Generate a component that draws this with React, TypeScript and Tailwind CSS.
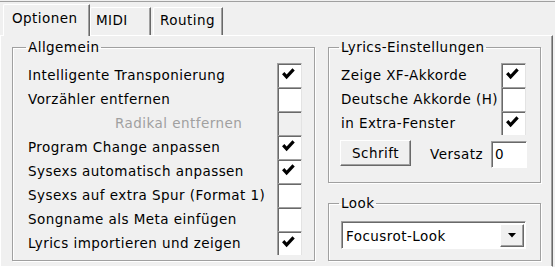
import clsx from "clsx";

const rows = [
  { label: "Intelligente Transponierung", checked: true },
  { label: "Vorzähler entfernen", checked: false },
  { label: "Radikal entfernen", checked: false, disabled: true },
  { label: "Program Change anpassen", checked: true },
  { label: "Sysexs automatisch anpassen", checked: true },
  { label: "Sysexs auf extra Spur (Format 1)", checked: false },
  { label: "Songname als Meta einfügen", checked: false },
  { label: "Lyrics importieren und zeigen", checked: true },
];

const lyrics = [
  { label: "Zeige XF-Akkorde", checked: true },
  { label: "Deutsche Akkorde (H)", checked: false },
  { label: "in Extra-Fenster", checked: true },
];

function Check() {
  return (
    <svg width="13" height="12" viewBox="0 0 13 12">
      <polyline
        points="1.2,5.2 4.6,8.8 11.6,1.4"
        fill="none"
        stroke="#000"
        strokeWidth="3.2"
      />
    </svg>
  );
}

function Box({ checked, disabled }: { checked?: boolean; disabled?: boolean }) {
  return (
    <div
      className={clsx(
        "w-[25px] h-[24px] shrink-0 border-t border-l border-r border-[#a0a0a0] border-r-[#e3e3e3] shadow-[inset_1px_1px_0_#696969] pl-[4px] pt-[4px]",
        disabled ? "bg-[#f0f0f0]" : "bg-white",
      )}
    >
      {checked && <Check />}
    </div>
  );
}

function Group({
  title,
  className,
  children,
}: {
  title: string;
  className?: string;
  children: React.ReactNode;
}) {
  return (
    <fieldset
      className={clsx(
        "border border-[#a0a0a0] shadow-[inset_1px_1px_0_#fff,1px_1px_0_#fff]",
        className,
      )}
    >
      <legend className="px-[2px] leading-[16px]">{title}</legend>
      {children}
    </fieldset>
  );
}

export default function App() {
  return (
    <div className="w-[555px] h-[267px] overflow-hidden bg-[#f0f0f0] pt-px text-[13.5px] tracking-[0.45px] text-black font-['Tahoma','DejaVu_Sans',sans-serif]">
      <div className="h-[266px] flex flex-col border-t border-[#a0a0a0]">
        {/* tab strip */}
        <div className="h-[33px] flex items-end pl-[3px] shrink-0">
          <div className="relative z-10 w-[87px] h-[32px] -mb-px bg-[#f0f0f0] border-t border-l border-white border-r border-r-[#696969] shadow-[inset_-1px_0_0_#a0a0a0] rounded-tl-[2px] pl-[8px] pt-[5px] leading-[16px]">
            Optionen
          </div>
          <div className="w-[61px] h-[28px] border-t border-l border-white border-r border-r-[#696969] shadow-[inset_-1px_0_0_#a0a0a0] rounded-tl-[2px] pl-[5px] pt-[4px] leading-[16px]">
            MIDI
          </div>
          <div className="ml-[2px] w-[70px] h-[28px] border-t border-l border-white border-r border-r-[#696969] shadow-[inset_-1px_0_0_#a0a0a0] rounded-tl-[2px] pl-[6px] pt-[4px] leading-[16px]">
            Routing
          </div>
        </div>

        {/* tab panel */}
        <div className="w-[553px] flex-1 border-t border-l border-b border-white border-r border-r-[#696969] shadow-[inset_-1px_0_0_#a0a0a0] pl-[11px] pt-[3px] flex gap-[13px]">
          <Group title="Allgemein" className="w-[303px] h-[222px] [&>legend]:ml-[13px]">
            <div className="pt-[8px] pl-[15px] pr-[12px] flex flex-col">
              {rows.map((r) => (
                <div key={r.label} className="h-[24px] flex items-center justify-between">
                  <span
                    className={clsx(
                      "whitespace-nowrap leading-[16px]",
                      r.disabled && "pl-[87px] text-[#a0a0a0]",
                    )}
                  >
                    {r.label}
                  </span>
                  <Box checked={r.checked} disabled={r.disabled} />
                </div>
              ))}
            </div>
          </Group>

          <div className="flex flex-col">
            <Group title="Lyrics-Einstellungen" className="w-[213px] [&>legend]:ml-[10px]">
              <div className="pt-[8px] pb-[14px] pl-[12px] pr-[14px]">
                {lyrics.map((r) => (
                  <div key={r.label} className="h-[24px] flex items-center justify-between">
                    <span className="whitespace-nowrap leading-[16px]">{r.label}</span>
                    <Box checked={r.checked} />
                  </div>
                ))}
                <div className="mt-[5px] h-[28px] flex items-start">
                  <button className="-ml-px w-[71px] h-[26px] bg-[#f0f0f0] border border-t-white border-l-white border-r-[#696969] border-b-[#696969] shadow-[inset_-1px_-1px_0_#a0a0a0] leading-[16px]">
                    Schrift
                  </button>
                  <span className="ml-auto mt-[6px] leading-[16px]">Versatz</span>
                  <div className="ml-[8px] -mr-px mt-px w-[36px] h-[27px] bg-white border-t border-l border-[#a0a0a0] border-r border-b border-r-white border-b-white shadow-[inset_1px_1px_0_#696969] pl-[3px] pt-[4px] leading-[16px]">
                    0
                  </div>
                </div>
              </div>
            </Group>

            <Group title="Look" className="mt-[12px] w-[213px] [&>legend]:ml-[10px]">
              <div className="pt-[10px] pb-[11px] pl-[12px] pr-[14px]">
                <div className="h-[28px] flex items-stretch bg-white border-t border-l border-[#a0a0a0] border-r border-b border-r-white border-b-white shadow-[inset_1px_1px_0_#696969] pl-[4px] pt-px pb-px pr-px">
                  <span className="flex-1 self-center leading-[16px] pt-[1px]">Focusrot-Look</span>
                  <div className="w-[24px] ml-[1px] mt-px bg-[#f0f0f0] border border-t-white border-l-white border-r-[#696969] border-b-[#696969] shadow-[inset_-1px_-1px_0_#a0a0a0] flex items-center justify-center">
                    <svg width="8" height="5" viewBox="0 0 8 5">
                      <polygon points="0,0 8,0 4,4.5" fill="#000" />
                    </svg>
                  </div>
                </div>
              </div>
            </Group>
          </div>
        </div>
      </div>
    </div>
  );
}
